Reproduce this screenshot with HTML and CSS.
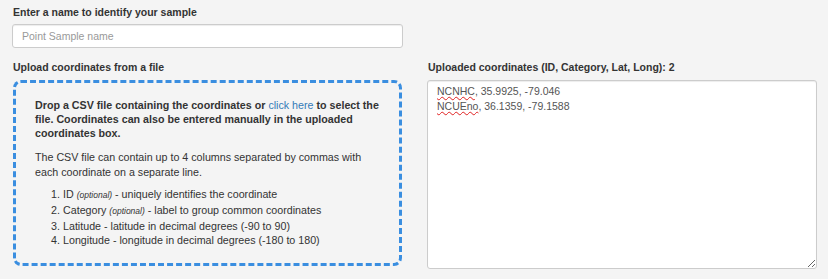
FILE: index.html
```html
<!DOCTYPE html>
<html lang="en">
<head>
    <meta charset="UTF-8">
    <title>Point Sample</title>
    <link rel="stylesheet" href="styles.css">
</head>
<body>
    <div class="page">
        <label class="field-label" for="sample-name">Enter a name to identify your sample</label>
        <input id="sample-name" class="text-input" type="text" placeholder="Point Sample name">

        <div class="columns">
            <div class="column">
                <div class="field-label">Upload coordinates from a file</div>
                <div class="drop-zone">
                    <p class="drop-lead">Drop a CSV file containing the coordinates or <a href="#">click here</a> to select the file. Coordinates can also be entered manually in the uploaded coordinates box.</p>
                    <p class="drop-text">The CSV file can contain up to 4 columns separated by commas with each coordinate on a separate line.</p>
                    <ol class="drop-list">
                        <li>ID <i>(optional)</i> - uniquely identifies the coordinate</li>
                        <li>Category <i>(optional)</i> - label to group common coordinates</li>
                        <li>Latitude - latitude in decimal degrees (-90 to 90)</li>
                        <li>Longitude - longitude in decimal degrees (-180 to 180)</li>
                    </ol>
                </div>
            </div>
            <div class="column">
                <div class="field-label">Uploaded coordinates (ID, Category, Lat, Long): 2</div>
                <div class="coords-box" contenteditable="true" spellcheck="false">
                    <div><span class="misspelled">NCNHC</span>, 35.9925, -79.046</div>
                    <div><span class="misspelled">NCUEno</span>, 36.1359, -79.1588</div>
                </div>
            </div>
        </div>
    </div>
</body>
</html>
```

FILE: styles.css
```css
body {
    margin: 0;
    background-color: #f4f4f4;
    font-family: "Liberation Sans", Arial, sans-serif;
    font-size: 10.5px;
    color: #333;
}

.page {
    padding: 5px 11px 0 12px;
}

.field-label {
    display: block;
    font-weight: bold;
    line-height: 15px;
    margin-left: 1px;
}

.text-input {
    display: block;
    box-sizing: border-box;
    width: 391px;
    height: 24px;
    margin-top: 4px;
    padding: 0 9px;
    font-family: inherit;
    font-size: 10.5px;
    color: #555;
    background: #fff;
    border: 1px solid #ccc;
    border-radius: 3px;
    box-shadow: inset 0 1px 1px rgba(0, 0, 0, 0.075);
}

.text-input::placeholder {
    color: #999;
}

.columns {
    display: grid;
    grid-template-columns: 391px 390px;
    column-gap: 24px;
    margin-top: 12px;
}

.drop-zone {
    box-sizing: border-box;
    height: 186px;
    margin-top: 5px;
    margin-left: 1px;
    margin-right: 1px;
    padding: 15px 16px 0 19px;
    font-size: 10.7px;
    border: 3px dashed #3a8ee0;
    border-radius: 8px;
}

.drop-zone p {
    margin: 0;
}

.drop-lead {
    font-weight: bold;
    line-height: 14px;
}

.drop-lead a {
    color: #337ab7;
    text-decoration: none;
    font-weight: normal;
}

.drop-text {
    margin-top: 10px !important;
    line-height: 14.5px;
}

.drop-list {
    margin: 8px 0 0 0;
    padding-left: 28px;
    line-height: 14.8px;
}

.drop-list i {
    font-size: 8.5px;
}

.coords-box {
    box-sizing: border-box;
    height: 189px;
    margin-top: 5px;
    padding: 3px 9px;
    line-height: 15px;
    color: #555;
    background: #fff;
    border: 1px solid #ccc;
    border-radius: 3px;
    box-shadow: inset 0 1px 1px rgba(0, 0, 0, 0.075);
    overflow: auto;
    resize: vertical;
    outline: none;
}

.misspelled {
    text-decoration: underline wavy #e02020;
    text-decoration-thickness: 1px;
    text-underline-offset: 1px;
}
```
